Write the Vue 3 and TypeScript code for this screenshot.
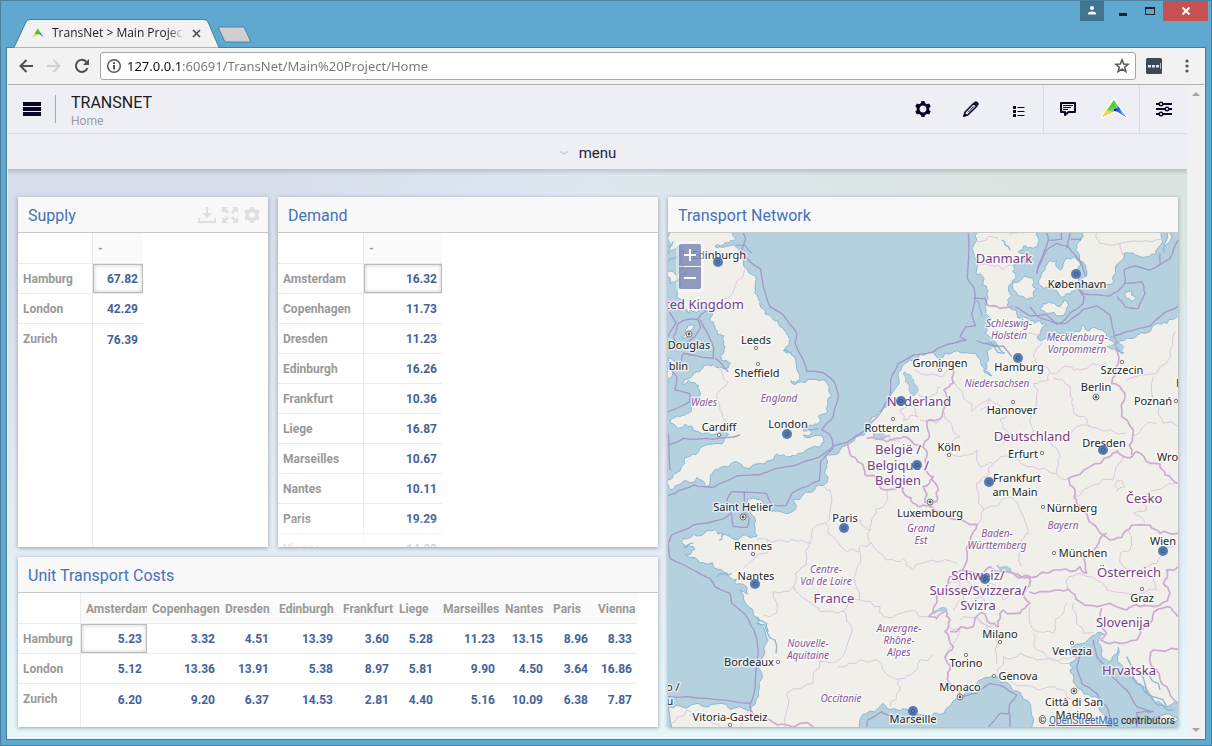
<script setup lang="ts">
import { ref } from 'vue'

type Point = [number, number]

interface Label {
  text: string
  x: number
  y: number
  kind: 'city' | 'country' | 'region'
}

interface Row {
  name: string
  values: string[]
}

const address = ref('127.0.0.1:60691/TransNet/Main%20Project/Home')

const supply: Row[] = [
  { name: 'Hamburg', values: ['67.82'] },
  { name: 'London', values: ['42.29'] },
  { name: 'Zurich', values: ['76.39'] },
]

const demand: Row[] = [
  { name: 'Amsterdam', values: ['16.32'] },
  { name: 'Copenhagen', values: ['11.73'] },
  { name: 'Dresden', values: ['11.23'] },
  { name: 'Edinburgh', values: ['16.26'] },
  { name: 'Frankfurt', values: ['10.36'] },
  { name: 'Liege', values: ['16.87'] },
  { name: 'Marseilles', values: ['10.67'] },
  { name: 'Nantes', values: ['10.11'] },
  { name: 'Paris', values: ['19.29'] },
  { name: 'Vienna', values: ['14.28'] },
]

const costColumns = [
  { name: 'Amsterdam', width: 66 },
  { name: 'Copenhagen', width: 73 },
  { name: 'Dresden', width: 54 },
  { name: 'Edinburgh', width: 64 },
  { name: 'Frankfurt', width: 56 },
  { name: 'Liege', width: 44 },
  { name: 'Marseilles', width: 62 },
  { name: 'Nantes', width: 48 },
  { name: 'Paris', width: 45 },
  { name: 'Vienna', width: 44 },
]

const costs: Row[] = [
  { name: 'Hamburg', values: ['5.23', '3.32', '4.51', '13.39', '3.60', '5.28', '11.23', '13.15', '8.96', '8.33'] },
  { name: 'London', values: ['5.12', '13.36', '13.91', '5.38', '8.97', '5.81', '9.90', '4.50', '3.64', '16.86'] },
  { name: 'Zurich', values: ['6.20', '9.20', '6.37', '14.53', '2.81', '4.40', '5.16', '10.09', '6.38', '7.87'] },
]

const grids = [
  { id: 'supply', title: 'Supply', tools: true, head: 75, columns: [{ name: '-', width: 50 }], rows: supply },
  { id: 'demand', title: 'Demand', tools: false, head: 86, columns: [{ name: '-', width: 78 }], rows: demand },
  { id: 'costs', title: 'Unit Transport Costs', tools: false, head: 63, columns: costColumns, rows: costs },
]

const gridWidth = (head: number, columns: { width: number }[]) =>
  columns.reduce((sum, column) => sum + column.width, head)

/* Small repeatable noise so that coasts and borders look natural. */
function rough(source: string, amount: number, closed = false): string {
  const points = source.split(' ').map((pair) => pair.split(',').map(Number) as Point)
  if (closed) points.push(points[0])
  let seed = points.length * 17 + Math.round(points[0][0])
  const random = () => {
    seed = (seed * 9301 + 49297) % 233280
    return seed / 233280 - 0.5
  }
  let line = points
  for (let pass = 0; pass < 2; pass++) {
    const next: Point[] = [line[0]]
    for (let i = 1; i < line.length; i++) {
      const [ax, ay] = line[i - 1]
      const [bx, by] = line[i]
      const length = Math.hypot(bx - ax, by - ay)
      if (length > 9 && length < 260) {
        const shift = random() * Math.min(length, 40) * amount
        next.push([(ax + bx) / 2 - ((by - ay) / length) * shift, (ay + by) / 2 + ((bx - ax) / length) * shift])
      }
      next.push([bx, by])
    }
    line = next
  }
  return 'M' + line.map(([x, y]) => `${Math.round(x)},${Math.round(y)}`).join('L') + (closed ? 'Z' : '')
}

const land = [
  // Great Britain
  '24,100 215,100 228,145 195,158 165,168 185,172 215,165 235,175 248,190 250,215 262,235 278,255 286,272 285,290 295,325 300,345 315,372 335,382 355,395 370,415 385,438 388,458 370,482 392,488 408,515 420,555 412,573 393,571 400,583 425,575 450,568 485,570 508,590 514,620 502,650 492,672 475,680 482,690 465,702 435,708 430,722 455,728 430,735 455,740 490,745 492,757 478,771 450,775 420,790 390,800 350,792 330,812 300,820 270,835 235,818 205,832 175,838 158,850 150,878 140,890 125,870 112,862 92,878 65,878 45,888 38,898 24,885 24,870 45,850 62,838 72,812 95,792 130,768 185,762 205,735 200,716 185,712 168,732 140,728 95,708 60,714 44,704 30,690 45,682 75,676 95,656 115,625 118,600 105,578 68,584 75,568 110,545 130,528 160,524 190,537 212,520 195,512 180,500 195,470 192,437 172,432 165,410 150,392 158,370 140,352 110,368 92,352 88,370 70,352 50,320 62,290 50,255 68,238 60,205 78,185 60,165 24,190',
  '98,402 98,418 84,442 68,446 76,418',
  '24,505 38,510 46,535 35,560 24,575',
  '24,245 42,248 46,275 30,282 24,260',
  // Continent
  '70,1043 100,1033 140,1022 165,1018 190,1035 215,1044 250,1036 275,1043 292,1036 283,1008 280,978 272,953 262,926 300,928 312,953 340,963 395,966 408,953 400,928 430,913 465,898 495,883 503,868 495,843 500,823 500,795 540,780 560,765 600,737 625,705 655,668 690,640 708,592 716,545 735,520 765,510 800,492 835,505 880,486 920,488 945,490 962,508 972,545 995,558 978,520 980,482 1010,470 1035,490 1010,462 990,440 978,410 992,385 975,350 980,330 985,302 965,285 970,262 948,250 950,150 945,100 1120,100 1138,150 1118,175 1090,168 1075,185 1098,198 1080,215 1060,225 1068,262 1048,285 1055,318 1042,345 1070,362 1082,385 1110,392 1140,392 1160,405 1132,440 1146,452 1180,442 1215,430 1256,425 1270,405 1290,420 1326,420 1342,448 1375,460 1412,446 1456,430 1505,402 1530,387 1560,378 1560,1540 1506,1543 1476,1518 1446,1488 1410,1460 1386,1425 1375,1372 1358,1400 1346,1418 1326,1383 1316,1348 1331,1333 1296,1338 1246,1363 1234,1373 1250,1403 1231,1418 1231,1448 1246,1483 1286,1513 1316,1538 1336,1578 1342,1640 1106,1640 1114,1573 1091,1528 1081,1508 1056,1498 1026,1478 996,1458 966,1468 936,1498 911,1518 886,1528 861,1553 836,1573 810,1580 770,1575 740,1558 700,1556 670,1540 630,1563 605,1578 603,1640 24,1640 24,1543 60,1548 130,1550 180,1540 210,1558 265,1563 285,1543 295,1508 305,1448 315,1388 318,1338 295,1298 280,1273 250,1228 240,1198 262,1212 250,1183 225,1178 230,1168 200,1148 175,1138 130,1118 95,1103 75,1093 105,1078 75,1068 65,1053',
  // Funen, Zealand, Lolland
  '1060,275 1090,260 1120,268 1130,295 1122,320 1100,328 1075,318',
  '1146,290 1144,250 1160,225 1190,212 1202,240 1216,208 1246,198 1262,225 1256,262 1246,292 1232,312 1206,322 1190,302 1166,292',
  '1140,355 1166,336 1200,350 1210,330 1226,345 1200,378 1164,370',
  // Southern Sweden and Baltic islands
  '1262,100 1270,140 1250,165 1256,190 1276,225 1281,250 1266,265 1286,280 1326,292 1361,275 1366,240 1391,205 1391,190 1426,195 1466,200 1496,172 1506,100',
  '1521,100 1512,188 1530,155 1538,100',
  '1396,303 1412,300 1429,325 1411,333 1396,322',
  '1500,1600 1480,1580 1520,1572 1554,1590',
].map((shape) => rough(shape, 0.55, true))

const lakes = [
  '732,545 752,555 764,585 775,600 758,618 748,590 735,575',
  '1340,470 1365,462 1392,470 1385,492 1365,480',
  '1010,1125 1040,1130 1058,1148 1030,1145',
  '820,1270 850,1252 862,1260 838,1262',
  '640,730 690,738 672,748 640,745',
].map((shape) => rough(shape, 0.4, true))

const creeks = [
  '225,170 262,175 275,190', '24,215 60,195', '80,240 50,275', '430,712 475,715', '372,482 395,490', '290,1285 320,1300 345,1350 348,1390',
  '290,1300 325,1325', '100,1060 70,1072', '170,1160 215,1150', '1050,180 1025,150', '950,330 965,380', '1030,490 975,460', '40,155 24,170', '178,1050 190,1030',
  '1350,440 1375,480 1392,488', '1450,1450 1500,1500', '1400,1400 1480,1530 1540,1560', '1420,1450 1450,1500 1520,1550',
].map((line) => rough(line, 0.6))

const seaBorders = [
  '250,129 257,150 245,180 270,215 302,238 310,290 330,350 370,375 410,430 405,460 425,500 440,543 490,548 525,580 535,620 520,680 485,720 510,735 520,768 560,757 610,725 660,670 690,620 692,570 715,520 760,495 816,487 850,468 918,450 900,440 918,410 947,407 935,370 945,325 940,290 922,265 925,129',
  '24,918 60,900 100,885 160,892 230,858 300,855 330,842 400,828 475,802 520,768',
  '520,775 482,815 478,872 440,890 395,910 378,946 335,944 318,910 215,905 200,935 215,972 185,988 100,1005 35,1035 24,1060 30,1105 100,1140 150,1165 165,1190 210,1210 215,1240 260,1280 285,1330 295,1380 285,1500 272,1540 140,1525 24,1520',
  '215,975 220,1010 262,1012 268,985 250,965 253,905',
  '40,440 55,400 85,388 112,388 122,410 105,440 75,460 50,460 40,440',
  '120,388 160,470 160,505 120,500 70,490 60,520 30,530 50,560 45,600 90,612 90,635 24,665',
  '24,440 48,398 28,365', '24,730 30,840', '24,765 70,745 160,748 240,735', '112,388 140,360', '165,505 205,545',
  '950,452 990,465 1030,468 1055,500', '940,323 975,325 982,345', '1066,350 1110,378 1160,375 1190,402 1218,400 1270,358 1310,348 1350,375 1362,438 1400,425 1470,408 1510,370 1554,350',
  '1110,350 1130,378 1200,400 1230,370 1270,340 1272,320 1250,290 1272,312 1350,318 1372,305 1395,280 1445,275 1455,310 1435,355 1395,350 1372,320',
  '1130,250 1160,180 1190,160 1225,170 1262,215 1278,260', '1130,250 1165,150 1160,129', '1165,150 1205,148 1205,129', '1230,129 1220,175', '1395,280 1392,240 1425,228 1470,240 1530,205 1554,150', '1500,190 1500,220', '1232,147 1265,147',
  '1270,1378 1250,1430 1265,1480 1310,1510 1340,1550 1355,1611', '1300,1350 1310,1400 1350,1450 1400,1500 1430,1550 1480,1565 1430,1568 1430,1611',
  '895,1520 950,1510 990,1480 1030,1490 1070,1515 1048,1545 1050,1611', '985,1611 1020,1570 1048,1570', '620,1611 622,1590 665,1565 700,1580', '270,1540 272,1570',
].map((line) => rough(line, 0.12))

const countryBorders = [
  '560,757 575,800 600,818 615,855 645,860 650,880 680,900 730,895 735,915 760,940 790,945 816,950 870,985 951,1003 930,1050 920,1080 908,1140 870,1160 850,1200 830,1220 805,1280 830,1285 858,1262 870,1290 855,1325 880,1370 855,1400 870,1440 865,1475 900,1500 895,1520',
  '620,745 680,755 700,748 730,740 760,760 790,772 800,800 790,840 820,860 790,890 795,940',
  '885,520 880,580 852,600 862,640 850,660 830,690 800,695 808,740 790,770',
  '816,860 835,900 830,935 810,945', '908,1140 950,1150 990,1130 1060,1150 1110,1160 1110,1185 1090,1215 1110,1240 1080,1270 1030,1260 1015,1310 990,1300 965,1268 940,1310 870,1325',
  '1108,1205 1170,1205 1225,1198 1260,1235 1330,1245 1400,1260 1440,1250 1500,1245 1530,1210 1510,1180 1520,1140 1554,1130',
  '1060,1150 1130,1160 1200,1140 1260,1130 1280,1150 1270,1100 1310,1070 1340,1030',
  '1225,865 1245,900 1250,940 1280,970 1340,1042 1385,1042 1415,1005 1470,1005 1500,1030 1554,1030',
  '1225,865 1290,830 1350,800 1372,782 1400,802 1430,785 1470,820 1500,822 1515,855 1554,880',
  '1365,455 1375,520 1355,580 1395,610 1385,680 1418,740 1415,795',
  '1325,1255 1315,1290 1340,1330 1322,1350 1380,1360 1430,1350 1440,1320 1470,1300 1490,1260 1520,1250 1554,1280',
  '1554,1378 1480,1380 1470,1400 1490,1440 1520,1490 1554,1540', '980,345 1020,355 1060,350', '272,1560 330,1590 380,1605 460,1611',
].map((line) => rough(line, 0.45))

const regionBorders = [
  '262,228 235,270 225,290 190,325', '178,525 190,565 205,575 182,600 180,660 205,700', '490,885 510,900 510,970 495,1000 455,1030 450,1060 400,1050 380,1055 290,1048',
  '320,1050 322,1090 250,1135', '450,1060 440,1110 405,1150 400,1190 340,1205 350,1270 310,1275', '400,1190 440,1230 480,1265 550,1262 560,1230 600,1230 660,1250 670,1280 720,1270 760,1260 800,1280', '495,1000 505,1030 560,1085 600,1085 605,1065 635,1060 630,1020 600,990 580,1000', '635,1060 680,1110 730,1105 760,1140 816,1110 890,1120',
  '680,900 670,950 640,980 632,1020', '600,1085 590,1140 600,1230', '550,1262 570,1300 560,1370 535,1410 480,1415 460,1480 380,1510 375,1611', '535,1430 580,1420 600,1410 650,1410 690,1460 735,1465 770,1440 780,1410 820,1395',
  '690,1550 720,1500 715,1465', '24,1600 80,1560 120,1590 160,1600 180,1611', '240,1611 272,1560', '945,230 985,225 1015,225 1035,235 1060,225', '1310,129 1320,160 1380,160 1440,155 1510,150', '1380,160 1390,200', '945,150 985,140 1015,150', '1048,135 1090,129',
  '1075,400 1100,430 1160,425', '1145,450 1120,500 1130,520 1170,550 1230,530 1260,540 1340,520', '1170,550 1165,570 1120,580 1130,620 1115,680 1120,730 1170,750 1200,800 1190,850', '1180,565 1230,590 1235,640 1260,680 1290,710 1240,720 1200,740',
  '880,570 930,640 935,665 990,625 1010,640 1040,680 1020,690 1050,730 1030,760', '960,660 990,630', '850,660 900,740 870,780 900,800 950,780 960,830 1000,820 1050,800', '1000,820 980,860 950,880 955,940 970,960 1050,920 1085,970 1105,1030 1080,1060 1085,1130',
  '970,960 951,1003', '1050,800 1120,830 1190,850 1225,865', '1290,710 1370,730 1400,725', '1480,560 1485,640 1510,700 1554,710', '1545,425 1530,480 1490,550 1400,570', '1416,740 1490,700', '1240,920 1300,885 1360,870 1390,800', '1366,880 1382,870 1396,890 1370,905 1366,880', '1450,920 1460,960 1420,970 1455,1000', '1450,920 1554,880',
  '1415,1005 1410,1080 1380,1100 1390,1130 1440,1140 1490,1120 1540,1070', '1225,1198 1220,1170 1260,1150 1330,1180 1340,1200 1440,1210 1490,1200 1480,1160', '1240,1240 1250,1300 1270,1330 1320,1340', '1110,1250 1120,1320 1180,1330 1200,1280 1220,1240', '1120,1330 1130,1380 1200,1410 1250,1400', '900,1290 960,1290 1010,1320', '860,1400 900,1320 860,1310', '1030,1400 1010,1440 1060,1480 1120,1490 1180,1490 1220,1520 1270,1530', '1030,1400 1080,1390 1130,1410 1230,1420',
  '950,1280 1000,1340 1010,1420', '640,740 720,755', '720,660 760,650 775,680 730,690 720,660', '760,600 780,620 830,610 840,590', '765,540 840,560 860,540', '780,690 830,700 850,680', '1230,147 1256,160', '860,1190 900,1170 910,1230 880,1260', '920,1170 960,1210 990,1180 1030,1230 1060,1190', '930,1240 960,1220 1000,1260',
].map((line) => rough(line, 0.5))

const labels: Label[] = [
  { text: 'Edinburgh', x: 51, y: 26, kind: 'city' },
  { text: 'Douglas', x: 21, y: 116, kind: 'city' },
  { text: 'Dublin', x: 3, y: 137, kind: 'city' },
  { text: 'Leeds', x: 88, y: 111, kind: 'city' },
  { text: 'Sheffield', x: 89, y: 144, kind: 'city' },
  { text: 'Cardiff', x: 51, y: 198, kind: 'city' },
  { text: 'London', x: 120, y: 195, kind: 'city' },
  { text: 'Groningen', x: 272, y: 134, kind: 'city' },
  { text: 'Rotterdam', x: 224, y: 199, kind: 'city' },
  { text: 'København', x: 409, y: 55, kind: 'city' },
  { text: 'Hamburg', x: 351, y: 138, kind: 'city' },
  { text: 'Szczecin', x: 454, y: 141, kind: 'city' },
  { text: 'Hannover', x: 344, y: 181, kind: 'city' },
  { text: 'Berlin', x: 428, y: 158, kind: 'city' },
  { text: 'Poznań', x: 485, y: 172, kind: 'city' },
  { text: 'Bydgoszcz', x: 535, y: 154, kind: 'city' },
  { text: 'Köln', x: 281, y: 218, kind: 'city' },
  { text: 'Erfurt', x: 355, y: 225, kind: 'city' },
  { text: 'Dresden', x: 436, y: 214, kind: 'city' },
  { text: 'Wrocław', x: 511, y: 228, kind: 'city' },
  { text: 'Frankfurt', x: 349, y: 249, kind: 'city' },
  { text: 'am Main', x: 347, y: 263, kind: 'city' },
  { text: 'Luxembourg', x: 262, y: 284, kind: 'city' },
  { text: 'Nürnberg', x: 404, y: 279, kind: 'city' },
  { text: 'München', x: 415, y: 324, kind: 'city' },
  { text: 'Wien', x: 495, y: 312, kind: 'city' },
  { text: 'Graz', x: 474, y: 369, kind: 'city' },
  { text: 'Saint Helier', x: 75, y: 278, kind: 'city' },
  { text: 'Paris', x: 177, y: 289, kind: 'city' },
  { text: 'Rennes', x: 85, y: 317, kind: 'city' },
  { text: 'Nantes', x: 88, y: 347, kind: 'city' },
  { text: 'Bordeaux', x: 81, y: 433, kind: 'city' },
  { text: 'Vitoria-Gasteiz', x: 62, y: 488, kind: 'city' },
  { text: 'Bilbao /', x: -8, y: 458, kind: 'city' },
  { text: 'u', x: 2, y: 472, kind: 'city' },
  { text: 'Marseille', x: 245, y: 490, kind: 'city' },
  { text: 'Monaco', x: 292, y: 458, kind: 'city' },
  { text: 'Torino', x: 298, y: 434, kind: 'city' },
  { text: 'Milano', x: 332, y: 405, kind: 'city' },
  { text: 'Genova', x: 350, y: 447, kind: 'city' },
  { text: 'Venezia', x: 404, y: 422, kind: 'city' },
  { text: 'Città di San', x: 406, y: 473, kind: 'city' },
  { text: 'Marino', x: 406, y: 486, kind: 'city' },
  { text: 'United Kingdom', x: 26, y: 76, kind: 'country' },
  { text: 'Danmark', x: 336, y: 30, kind: 'country' },
  { text: 'Nederland', x: 251, y: 173, kind: 'country' },
  { text: 'België /', x: 230, y: 221, kind: 'country' },
  { text: 'Belgique /', x: 230, y: 237, kind: 'country' },
  { text: 'Belgien', x: 230, y: 252, kind: 'country' },
  { text: 'Deutschland', x: 364, y: 208, kind: 'country' },
  { text: 'France', x: 166, y: 370, kind: 'country' },
  { text: 'Česko', x: 476, y: 270, kind: 'country' },
  { text: 'Österreich', x: 461, y: 344, kind: 'country' },
  { text: 'Slovenija', x: 455, y: 394, kind: 'country' },
  { text: 'Hrvatska', x: 461, y: 442, kind: 'country' },
  { text: 'Schweiz/', x: 310, y: 347, kind: 'country' },
  { text: 'Suisse/Svizzera/', x: 310, y: 362, kind: 'country' },
  { text: 'Svizra', x: 310, y: 377, kind: 'country' },
  { text: 'England', x: 111, y: 169, kind: 'region' },
  { text: 'Wales', x: 36, y: 173, kind: 'region' },
  { text: 'Schleswig-', x: 341, y: 94, kind: 'region' },
  { text: 'Holstein', x: 341, y: 106, kind: 'region' },
  { text: 'Mecklenburg-', x: 409, y: 108, kind: 'region' },
  { text: 'Vorpommern', x: 409, y: 120, kind: 'region' },
  { text: 'Niedersachsen', x: 329, y: 154, kind: 'region' },
  { text: 'Grand', x: 253, y: 299, kind: 'region' },
  { text: 'Est', x: 253, y: 311, kind: 'region' },
  { text: 'Baden-', x: 329, y: 304, kind: 'region' },
  { text: 'Württemberg', x: 329, y: 316, kind: 'region' },
  { text: 'Bayern', x: 395, y: 296, kind: 'region' },
  { text: 'Centre-', x: 158, y: 340, kind: 'region' },
  { text: 'Val de Loire', x: 158, y: 352, kind: 'region' },
  { text: 'Nouvelle-', x: 140, y: 414, kind: 'region' },
  { text: 'Aquitaine', x: 140, y: 426, kind: 'region' },
  { text: 'Auvergne-', x: 231, y: 399, kind: 'region' },
  { text: 'Rhône-', x: 231, y: 411, kind: 'region' },
  { text: 'Alpes', x: 231, y: 423, kind: 'region' },
  { text: 'Occitanie', x: 173, y: 469, kind: 'region' },
]

const towns: Point[] = [
  [88, 115], [90, 131], [51, 202], [225, 186], [272, 137], [345, 169], [454, 129], [508, 168], [281, 222], [374, 220], [375, 274],
  [386, 320], [474, 356], [85, 321], [110, 429], [62, 492], [298, 422], [332, 409], [326, 443], [404, 410],
]
const capitals: Point[] = [[21, 101], [428, 164], [262, 269], [75, 284], [292, 464], [406, 458]]
const sites: Point[] = [
  [50, 29], [408, 41], [350, 125], [233, 168], [119, 201], [435, 217], [249, 232], [321, 249], [176, 295], [495, 318],
  [87, 351], [317, 346], [245, 478],
]
</script>

<template>
  <div class="window">
    <header class="titlebar">
      <svg class="tab-shape" width="256" height="29" viewBox="0 19 256 29" aria-hidden="true">
        <path d="M7,48 H7.500 L14,47.500 L26,22 Q27,19.500 30,19.500 H204 Q207,19.500 208,22 L219,47.500 V48 Z" fill="#f2f2f2" stroke="#477e9e" />
        <path d="M220,27 H244 L251,42 H227 Q225,42 224,40 L218.500,28 Q218.500,27 220,27Z" fill="#cfcfcf" stroke="#4c86a6" />
      </svg>
      <div class="tab">
        <svg width="12" height="10" viewBox="0 0 26 20" aria-hidden="true">
          <path d="M13,0 L0,20 L15,12Z" fill="#e9cf2b" />
          <path d="M13,0 L6,11 L15,13 L17,8Z" fill="#45c52c" />
          <path d="M15,11 L17,8 L26,20Z" fill="#2863dc" />
        </svg>
        <span class="tab-title">TransNet &gt; Main Project/Home</span>
        <button class="tab-close" aria-label="Close tab">
          <svg width="9" height="9" viewBox="0 0 9 9"><path d="M1,1 L8,8 M8,1 L1,8" stroke="#505050" stroke-width="1.700" /></svg>
        </button>
      </div>
      <div class="window-buttons">
        <button class="user" aria-label="User">
          <svg width="10" height="10" viewBox="0 0 10 10"><circle cx="5" cy="2" r="2" fill="#fff" /><path d="M1,8.500 V7.500 Q1,5.500 5,5.500 T9,7.500 V8.500Z" fill="#fff" /></svg>
        </button>
        <button class="minimize" aria-label="Minimize"><svg width="8" height="10" viewBox="0 0 8 10"><path d="M0,8.500 H8" stroke="#222" stroke-width="3" /></svg></button>
        <button class="maximize" aria-label="Maximize"><svg width="10" height="8" viewBox="0 0 10 8"><path d="M0,0 H10 V8 H0Z M1,2 H9 V7 H1Z" fill="#222" fill-rule="evenodd" /></svg></button>
        <button class="close" aria-label="Close"><svg width="8" height="8" viewBox="0 0 8 8"><path d="M.5,.5 L7.500,7.500 M7.500,.5 L.5,7.500" stroke="#fff" stroke-width="2" /></svg></button>
      </div>
    </header>

    <div class="frame">
      <nav class="toolbar">
        <button aria-label="Back"><svg width="14" height="14" viewBox="0 0 14 14"><path d="M14,7 H1.500 M7.500,1 L1.500,7 L7.500,13" fill="none" stroke="#505050" stroke-width="2" /></svg></button>
        <button aria-label="Forward"><svg width="14" height="14" viewBox="0 0 14 14"><path d="M0,7 H12.500 M6.500,1 L12.500,7 L6.500,13" fill="none" stroke="#d0d0d0" stroke-width="2" /></svg></button>
        <button aria-label="Reload"><svg width="16" height="16" viewBox="0 0 16 16"><path d="M13.500,10 A6,6 0 1 1 12.300,3.800" fill="none" stroke="#505050" stroke-width="2" /><path d="M15,1 V7 H9Z" fill="#505050" /></svg></button>
        <div class="address">
          <svg width="16" height="16" viewBox="0 0 16 16" aria-hidden="true"><circle cx="8" cy="8" r="6.300" fill="none" stroke="#555" stroke-width="1.500" /><path d="M8,7 V11.500 M8,4.200 V6" stroke="#555" stroke-width="2" /></svg>
          <div class="address-field">
            <input v-model="address" type="text" aria-label="Address" />
          </div>
          <button aria-label="Bookmark"><svg width="16" height="16" viewBox="0 0 16 16"><path d="M8,1.800 L9.700,6 L14.200,6.300 L10.700,9.200 L11.900,13.700 L8,11.200 L4.100,13.700 L5.300,9.200 L1.800,6.300 L6.300,6Z" fill="none" stroke="#555" stroke-width="1.500" /></svg></button>
        </div>
        <button aria-label="Extension"><svg width="16" height="16" viewBox="0 0 16 16"><rect width="16" height="16" rx="1.500" fill="#3d4852" /><path d="M2,7 h3 v2.500 h-3z M6,7 h3 v2.500 h-3z M10,7 h3 v2.500 h-3z M14,5 h.7 v6 h-.7z" fill="#e5e8ea" /></svg></button>
        <button class="more" aria-label="Browser menu"><svg width="4" height="14" viewBox="0 0 4 14"><circle cx="2" cy="2" r="1.600" fill="#555" /><circle cx="2" cy="7" r="1.600" fill="#555" /><circle cx="2" cy="12" r="1.600" fill="#555" /></svg></button>
      </nav>

      <div class="viewport">
        <main class="app">
          <header class="app-header">
            <button class="burger" aria-label="Pages"><svg width="18" height="14" viewBox="0 0 18 14"><path d="M0,2 H18 M0,7 H18 M0,12 H18" stroke="#060a24" stroke-width="4" /></svg></button>
            <div class="heading">
              <h1>TRANSNET</h1>
              <p>Home</p>
            </div>
            <button class="action" aria-label="Settings">
              <svg width="16" height="16" viewBox="-8 -8 16 16"><circle r="4.900" fill="none" stroke="#060a24" stroke-width="2.800" /><path v-for="a in 6" :key="a" :transform="`rotate(${a * 60})`" d="M-2.200,-5 L-1.600,-8 H1.600 L2.200,-5Z" fill="#060a24" /></svg>
            </button>
            <button class="action" aria-label="Edit">
              <svg width="16" height="16" viewBox="0 0 16 16"><path d="M1,15 L2.200,11 L10.800,2.300 L13.700,5.200 L5,13.800Z" fill="none" stroke="#060a24" stroke-width="1.600" stroke-linejoin="round" /><path d="M0,16 L1.500,11.500 L4.500,14.500Z M11,1.500 L12,.6 Q13,-.2 14.200,.8 L15.300,1.900 Q16.300,3 15.400,4 L14.500,5Z" fill="#060a24" /><path d="M5,11.300 L11,5.300" stroke="#060a24" /></svg>
            </button>
            <button class="action low" aria-label="List">
              <svg width="12" height="11" viewBox="0 0 12 11"><path d="M0,0 h3 v3 h-3z M0,4 h3 v3 h-3z M0,8 h3 v3 h-3z M4.500,1 h7 v1 h-7z M4.500,5 h7 v1 h-7z M4.500,9 h7 v1 h-7z" fill="#060a24" /></svg>
            </button>
            <button class="action divided" aria-label="Comments">
              <svg width="16" height="16" viewBox="0 0 16 16"><path d="M1,2 H15 V11 H8.500 L5,14 V11 H1Z" fill="none" stroke="#060a24" stroke-width="2" stroke-linejoin="round" /><path d="M3,4.500 H13 M3,6.500 H11 M3,8.500 H8" stroke="#060a24" /></svg>
            </button>
            <button class="action" aria-label="AIMMS">
              <svg width="28" height="22" viewBox="0 -1 28 22"><path d="M13,0 L0,19 L14,12 L26,19Z" fill="#fff" stroke="#fff" stroke-width="2" /><path d="M11,4 L6,11 L10,14 L1,18Z" fill="#f0b93a" /><path d="M6,10 L12,13 L1,18Z" fill="#f3d545" /><path d="M13,1 L6,11 L15,8Z" fill="#8ade40" /><path d="M13,1 L6,11 L12,13 L18,9Z" fill="#4fbe3c" fill-opacity=".75" /><path d="M13,10 L18,9 L20,13 L13,12Z" fill="#16139a" /><path d="M17,7 L25,18 L15,12Z" fill="#286ae0" /><path d="M19,10 L25,18 L20,14Z" fill="#77b6ff" /></svg>
            </button>
            <button class="action divided" aria-label="Filters">
              <svg width="16" height="16" viewBox="0 0 16 16"><path d="M0,3 H16 M0,8 H16 M0,13 H16" stroke="#060a24" stroke-width="2" /><g fill="#eeeff4" stroke="#060a24" stroke-width="1.400"><circle cx="5" cy="3" r="1.800" /><circle cx="11" cy="8" r="1.800" /><circle cx="5" cy="13" r="1.800" /></g></svg>
            </button>
          </header>
          <button class="menu-bar">
            <svg width="10" height="6" viewBox="0 0 10 6" aria-hidden="true"><path d="M1,1.500 L5,4 L9,1.500" fill="none" stroke="#cfd2d8" stroke-width="1.600" /></svg>
            menu
          </button>

          <div class="board">
            <section v-for="grid in grids" :key="grid.id" class="panel" :class="grid.id">
              <header class="panel-header">
                <h2>{{ grid.title }}</h2>
                <div v-if="grid.tools" class="tools">
                  <button aria-label="Download"><svg width="18" height="16" viewBox="0 0 18 16"><path d="M8,0 H10 V6 H13.500 L9,11.500 L4.500,6 H8Z M0,11 H2 V14 H16 V11 H18 V16 H0Z" fill="#dfdfdf" /></svg></button>
                  <button aria-label="Expand"><svg width="16" height="16" viewBox="0 0 16 16"><path d="M0,0 H6 L4,2 L7,5 L5,7 L2,4 L0,6Z M16,0 V6 L14,4 L11,7 L9,5 L12,2 L10,0Z M0,16 V10 L2,12 L5,9 L7,11 L4,14 L6,16Z M16,16 H10 L12,14 L9,11 L11,9 L14,12 L16,10Z" fill="#dfdfdf" /></svg></button>
                  <button aria-label="Widget settings"><svg width="16" height="16" viewBox="-8 -8 16 16"><circle r="4.700" fill="none" stroke="#dfdfdf" stroke-width="3.400" /><path v-for="a in 6" :key="a" :transform="`rotate(${a * 60})`" d="M-2.400,-5 L-1.700,-8 H1.700 L2.400,-5Z" fill="#dfdfdf" /></svg></button>
                </div>
              </header>
              <div class="panel-body">
                <table :style="{ width: gridWidth(grid.head, grid.columns) + 'px' }">
                  <colgroup>
                    <col :style="{ width: grid.head + 'px' }" />
                    <col v-for="column in grid.columns" :key="column.name" :style="{ width: column.width + 'px' }" />
                  </colgroup>
                  <thead>
                    <tr>
                      <td></td>
                      <th v-for="column in grid.columns" :key="column.name" scope="col">{{ column.name }}</th>
                    </tr>
                  </thead>
                  <tbody>
                    <tr v-for="(row, r) in grid.rows" :key="row.name">
                      <th scope="row">{{ row.name }}</th>
                      <td v-for="(value, c) in row.values" :key="c" :class="{ selected: r === 0 && c === 0 }">{{ value }}</td>
                    </tr>
                    <tr class="filler"><th></th></tr>
                  </tbody>
                </table>
              </div>
            </section>

            <section class="panel network">
              <header class="panel-header"><h2>Transport Network</h2></header>
              <div class="map">
                <svg viewBox="0 0 510 494" preserveAspectRatio="xMidYMid slice" role="img" aria-label="Map of transport locations">
                  <g class="geo" transform="scale(0.33333) translate(-24 -129)">
                    <path v-for="(d, i) in land" :key="'l' + i" :d="d" class="land" />
                    <path v-for="(d, i) in lakes" :key="'w' + i" :d="d" class="lake" />
                    <path v-for="(d, i) in creeks" :key="'c' + i" :d="d" class="creek" />
                    <path v-for="(d, i) in regionBorders" :key="'r' + i" :d="d" class="region-border" />
                    <path v-for="(d, i) in countryBorders" :key="'b' + i" :d="d" class="country-border" />
                    <path v-for="(d, i) in seaBorders" :key="'s' + i" :d="d" class="sea-border" />
                  </g>
                  <circle v-for="([x, y], i) in towns" :key="'t' + i" :cx="x" :cy="y" r="1.700" class="town" />
                  <g v-for="([x, y], i) in capitals" :key="'k' + i" class="capital">
                    <circle :cx="x" :cy="y" r="3" class="town" /><circle :cx="x" :cy="y" r="1.400" />
                  </g>
                  <text v-for="(label, i) in labels" :key="'n' + i" :x="label.x" :y="label.y" :class="label.kind">{{ label.text }}</text>
                  <g v-for="([x, y], i) in sites" :key="'m' + i" class="site">
                    <circle :cx="x" :cy="y" r="5" /><circle :cx="x" :cy="y" r="1.800" class="core" />
                  </g>
                </svg>
                <div class="zoom">
                  <button aria-label="Zoom in"><svg width="12" height="12" viewBox="0 0 12 12"><path d="M0,6 H12 M6,0 V12" stroke="#fff" stroke-width="2" /></svg></button>
                  <button aria-label="Zoom out"><svg width="12" height="12" viewBox="0 0 12 12"><path d="M0,6 H12" stroke="#fff" stroke-width="2" /></svg></button>
                </div>
                <p class="attribution">© <a href="#">OpenStreetMap</a> contributors</p>
              </div>
            </section>
          </div>
        </main>
        <div class="scrollbar" aria-hidden="true"><i class="up"></i><i class="down"></i></div>
      </div>
    </div>
  </div>
</template>

<style>
body {
  margin: 0;
}
</style>

<style scoped>
* {
  box-sizing: border-box;
}

button {
  display: flex;
  align-items: center;
  justify-content: center;
  margin: 0;
  padding: 0;
  border: 0;
  background: none;
  font: inherit;
}

svg {
  display: block;
  flex: none;
}

.window {
  display: flex;
  flex-direction: column;
  height: 100vh;
  padding: 0 5px 5px;
  border: 1px solid #4b7f9d;
  background: #5fa8cf;
  font-family: Roboto, sans-serif;
}

/* Title bar */
.titlebar {
  position: relative;
  display: flex;
  justify-content: space-between;
  flex: none;
  height: 46px;
}

.tab-shape {
  position: absolute;
  left: -6px;
  bottom: -1px;
  z-index: 1;
}

.tab {
  position: relative;
  z-index: 2;
  display: flex;
  align-items: center;
  width: 197px;
  height: 28px;
  margin-top: 18px;
  padding-left: 26px;
}

.tab-title {
  flex: none;
  width: 132px;
  margin-left: 8px;
  overflow: hidden;
  color: #222;
  font: 12px/16px "Open Sans", sans-serif;
  white-space: nowrap;
  -webkit-mask-image: linear-gradient(to right, #000 88%, transparent);
  mask-image: linear-gradient(to right, #000 88%, transparent);
}

.tab-close {
  margin-left: 8px;
}

.window-buttons {
  display: flex;
  height: 20px;
  margin-right: -2px;
}

.user {
  width: 24px;
  margin-right: 6px;
  background: #42738f;
}

.minimize {
  width: 26px;
}

.maximize {
  width: 27px;
}

.close {
  width: 45px;
  background: #c75050;
}

.frame {
  display: flex;
  flex-direction: column;
  flex: 1;
  min-height: 0;
  padding: 0 1px;
  border: 1px solid #477e9e;
  background: #f2f2f2;
}

/* Browser toolbar */
.toolbar {
  display: flex;
  align-items: center;
  flex: none;
  gap: 12px;
  height: 37px;
  padding: 0 9px 0 10px;
  border-bottom: 1px solid #b0b0b0;
}

.toolbar > button {
  width: 16px;
}

.address {
  display: flex;
  align-items: center;
  flex: 1;
  height: 28px;
  margin: 0 -2px;
  padding: 0 5px;
  border: 1px solid #a6a6a6;
  border-radius: 3px;
  background: #fff;
}

.address-field {
  flex: 1;
  margin-left: 5px;
}

.address input {
  display: block;
  width: 100%;
  padding: 0;
  border: 0;
  outline: 0;
  background: linear-gradient(to right, #111 55px, #777 55px);
  background-clip: text;
  -webkit-background-clip: text;
  color: transparent;
  font: 13px/20px "Noto Sans", sans-serif;
}

.toolbar > .more {
  margin-left: 5px;
}

/* Application shell */
.viewport {
  display: flex;
  flex: 1;
  min-height: 0;
}

.app {
  display: flex;
  flex-direction: column;
  flex: 1;
  min-width: 0;
  background:
    radial-gradient(ellipse 700px 330px at 100% 0, #dbe4e1 40%, transparent),
    radial-gradient(ellipse 600px 400px at 0 0, #d7dee9 50%, transparent),
    linear-gradient(to bottom, #dde8f1 0, #e2e8f2 55%, #e6f3fb 90%, #e6f8f8 100%);
}

.app-header {
  display: flex;
  align-items: stretch;
  flex: none;
  height: 49px;
  border-bottom: 1px solid #dcdde2;
  background: #eeeff4;
}

.burger {
  width: 47px;
}

.heading {
  flex: 1;
  align-self: center;
  height: 28px;
  padding-left: 15px;
  border-left: 1px solid #a8a9ad;
}

.heading h1 {
  margin: -2px 0 0;
  color: #1c1c22;
  font-size: 16px;
  font-weight: 400;
  line-height: 20px;
}

.heading p {
  margin: 0;
  color: #9b9b9e;
  font-size: 12px;
  line-height: 16px;
}

.action {
  width: 48px;
}

.action.low {
  padding-top: 4px;
}

.action.divided {
  border-left: 1px solid #d9dbe1;
}

.menu-bar {
  flex: none;
  gap: 10px;
  height: 35px;
  padding-top: 3px;
  padding-right: 20px;
  background: #eeeff4;
  color: #22243a;
  font-size: 15px;
}

.board {
  display: grid;
  flex: 1;
  grid-template-columns: 25fr 38fr 51fr;
  grid-template-rows: 35fr 17fr;
  gap: 10px;
  min-height: 0;
  padding: 28px 9px 12px 10px;
  background: linear-gradient(to bottom, rgba(40, 60, 70, 0.2), rgba(40, 60, 70, 0)) top / 100% 6px no-repeat;
}

.panel {
  display: flex;
  flex-direction: column;
  min-width: 0;
  min-height: 0;
  background: #fff;
  box-shadow: 0 1px 4px rgba(50, 60, 75, 0.45);
}

.costs {
  grid-row: 2;
  grid-column: 1 / 3;
}

.network {
  grid-row: 1 / 3;
  grid-column: 3;
}

.panel-header {
  display: flex;
  align-items: center;
  justify-content: space-between;
  flex: none;
  height: 36px;
  padding: 0 8px 0 10px;
  border-bottom: 1px solid #c8c8c8;
  background: #f8f8f8;
}

.panel-header h2 {
  margin: 0;
  padding-top: 2px;
  color: #4472b9;
  font-size: 16px;
  font-weight: 400;
}

.tools {
  display: flex;
  gap: 6px;
}

.panel-body {
  position: relative;
  flex: 1;
  min-height: 0;
  overflow: hidden;
}

.demand .panel-body::after {
  content: "";
  position: absolute;
  inset: auto 0 0;
  height: 30px;
  background: linear-gradient(to bottom, rgba(255, 255, 255, 0), rgba(255, 255, 255, 0.8));
}

/* Data grids */
table {
  height: 100%;
  border-spacing: 0;
  table-layout: fixed;
}

tr {
  height: 30px;
}

.filler {
  height: auto;
}

th,
td {
  height: 30px;
  padding: 0 5px;
  overflow: hidden;
  font-size: 12px;
  line-height: 28px;
  white-space: nowrap;
}

th {
  color: #999;
  font-weight: 700;
  text-align: left;
}

thead td,
thead th {
  height: 31px;
  border-bottom: 1px solid #ebebeb;
}

thead th {
  padding-top: 2px;
  padding-right: 0;
  background: #fafafa;
}

thead td,
tbody th {
  border-right: 1px solid #ebebeb;
}

tbody th,
tbody td {
  border-bottom: 1px solid #ebebeb;
}

tbody th {
  padding-right: 0;
}

tbody td {
  padding-top: 2px;
  line-height: 27px;
}

td {
  color: #44629a;
  font-weight: 700;
  text-align: right;
}

.supply tbody tr:nth-child(3) > *,
.costs tbody tr:nth-child(3) > *,
.filler > th {
  border-bottom: 0;
}

.filler > th {
  height: auto;
  line-height: 0;
}

.selected {
  box-shadow: inset 0 0 0 1px #bcbcbc, inset 0 0 5px rgba(0, 0, 0, 0.3);
}

/* Map */
.map {
  position: relative;
  flex: 1;
  min-height: 0;
  overflow: hidden;
  background: #b5d0de;
}

.map > svg {
  width: 100%;
  height: 100%;
}

.geo path {
  fill: none;
  stroke-linejoin: round;
}

.geo .land {
  fill: #f0efea;
  stroke: #8ab8d2;
  stroke-width: 3;
}

.geo .lake {
  fill: #b5d0de;
  stroke: #8ab8d2;
  stroke-width: 2;
}

.geo .creek {
  stroke: #8ab8d2;
  stroke-width: 4;
}

.geo .region-border {
  stroke: #dcc6df;
  stroke-width: 3;
}

.geo .country-border {
  stroke: #cdaad2;
  stroke-width: 5;
}

.geo .sea-border {
  stroke: #a08fc4;
  stroke-width: 4;
  stroke-opacity: 0.85;
}

.map text {
  text-anchor: middle;
  paint-order: stroke;
  stroke: rgba(255, 255, 255, 0.65);
  stroke-width: 3px;
  stroke-linejoin: round;
  font-family: "Noto Sans", sans-serif;
}

.map .city {
  fill: #262626;
  font-size: 11px;
}

.map .country {
  fill: #763e87;
  font-size: 13px;
}

.map .region {
  fill: #84589a;
  font-size: 10px;
  font-style: italic;
}

.town {
  fill: #f6f5f0;
  stroke: #777;
}

.capital circle:last-child {
  fill: #555;
}

.site circle {
  fill: #416ba5;
  fill-opacity: 0.88;
}

.site .core {
  fill: none;
  stroke: #2c5288;
  stroke-opacity: 0.6;
}

.zoom {
  position: absolute;
  top: 8px;
  left: 8px;
  display: flex;
  flex-direction: column;
  gap: 1px;
  padding: 3px;
  border-radius: 4px;
  background: rgba(255, 255, 255, 0.4);
}

.zoom button {
  width: 22px;
  height: 22px;
  background: rgba(110, 122, 175, 0.75);
}

.zoom button:first-child {
  border-radius: 2px 2px 0 0;
}

.zoom button:last-child {
  border-radius: 0 0 2px 2px;
}

.attribution {
  position: absolute;
  right: 3px;
  bottom: 0;
  margin: 0;
  color: #222;
  font-size: 10px;
  line-height: 12px;
}

.attribution a {
  color: #3c6ab0;
}

/* Scrollbar */
.scrollbar {
  display: flex;
  flex-direction: column;
  justify-content: space-between;
  align-items: center;
  flex: none;
  width: 17px;
  padding: 7px 0;
  background: #f1f1f1;
}

.scrollbar i {
  border: 4px solid transparent;
}

.scrollbar .up {
  border-top: 0;
  border-bottom-color: #a3a3a3;
}

.scrollbar .down {
  border-bottom: 0;
  border-top-color: #a3a3a3;
}
</style>
